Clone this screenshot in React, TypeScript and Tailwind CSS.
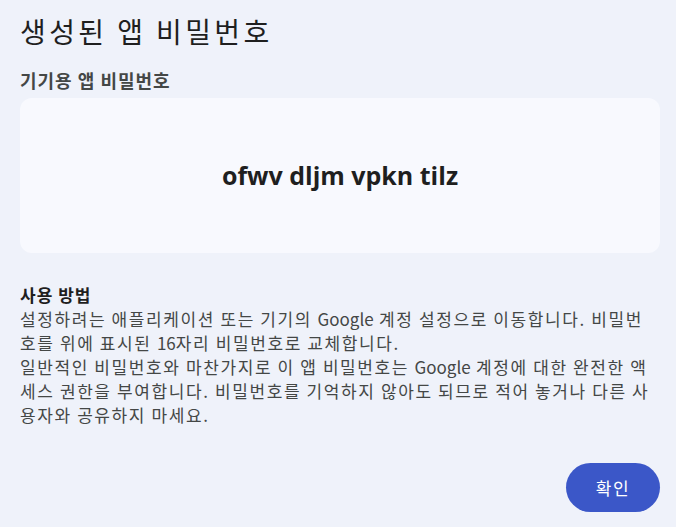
import React from 'react';

export default function App() {
    return (
        <div className="w-[676px] h-[527px] bg-[#eff2fa] pl-5 pr-4 pt-[12px] text-[#1f1f1f] font-['Noto_Sans_CJK_KR','Noto_Sans',sans-serif] overflow-hidden">
            <h1 className="text-[28px] leading-[38px] font-normal tracking-[3.4px] text-[#1f1f1f]">생성된 앱 비밀번호</h1>
            <div className="mt-[18px] text-[18px] leading-6 font-bold tracking-[1px] text-[#444746]">기기용 앱 비밀번호</div>
            <div className="mt-[6px] h-[155px] rounded-xl bg-[#f8f9fe] flex items-center justify-center">
                <span className="text-[25px] font-bold text-[#1f1f1f] font-['Open_Sans','Noto_Sans',sans-serif]">ofwv dljm vpkn tilz</span>
            </div>
            <div className="mt-[30px] text-[17px] leading-6 tracking-[1.6px] text-[#444746]">
                <div className="font-bold text-[#1f1f1f] tracking-[1px]">사용 방법</div>
                <p>설정하려는 애플리케이션 또는 기기의 <span className="tracking-normal">Google</span> 계정 설정으로 이동합니다. 비밀번호를 위에 표시된 <span className="tracking-normal">16</span>자리 비밀번호로 교체합니다.</p>
                <p>일반적인 비밀번호와 마찬가지로 이 앱 비밀번호는 <span className="tracking-normal">Google</span> 계정에 대한 완전한 액세스 권한을 부여합니다. 비밀번호를 기억하지 않아도 되므로 적어 놓거나 다른 사용자와 공유하지 마세요.</p>
            </div>
            <div className="mt-[36px] flex justify-end">
                <button className="h-[49px] w-[94px] rounded-full bg-[#3b57c8] text-white text-[17px] tracking-[1.5px]">확인</button>
            </div>
        </div>
    );
}
